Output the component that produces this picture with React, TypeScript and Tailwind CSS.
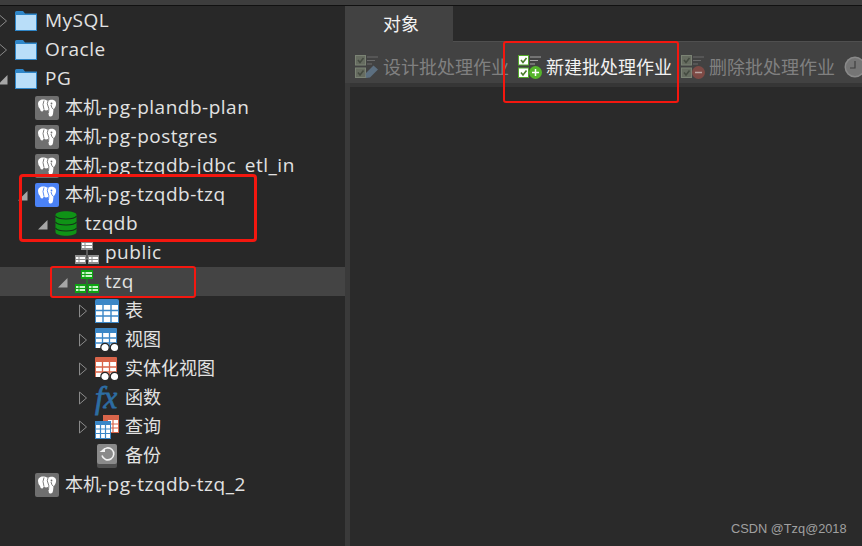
import type { ReactNode } from "react";

function ArrowOpen() {
  return (
    <svg width="10" height="14" viewBox="0 0 10 14" className="-ml-[2px] shrink-0">
      <path d="M1.5 1 L8.5 7 L1.5 13 Z" fill="none" stroke="#8a8a8a" strokeWidth="1" />
    </svg>
  );
}

function ArrowDown() {
  return (
    <svg width="10" height="10" viewBox="0 0 10 10" className="-ml-[2px] mt-[3px] shrink-0">
      <path d="M0 9.5 L9.5 9.5 L9.5 0 Z" fill="#a6a6a6" />
    </svg>
  );
}

function FolderIcon() {
  return (
    <svg width="22" height="20" viewBox="0 0 22 20">
      <path d="M0 1.5 Q0 0 1.5 0 H8 L10 2.5 H22 V20 H0 Z" fill="#2f86c8" />
      <rect x="1" y="4" width="20" height="15" fill="#b9def9" />
    </svg>
  );
}

function PgIcon({ active }: { active?: boolean }) {
  const bg = active ? "#4b82f5" : "#6f6f6f";
  return (
    <svg width="24" height="24" viewBox="0 0 24 24">
      <rect width="24" height="24" rx="2" fill={bg} />
      <path
        d="M3 8 C3 4.5 6 3 9 3.5 C11 3.8 12 4.5 13 5 C15 3.6 19 3.2 20.5 5.5 C22 8 20.5 11.5 18.5 13.5 L18 18 Q17.5 21 15 20.5 Q13.5 20 13.5 17.5 L13 14 Q10.5 15 9 13.5 L7.5 15.5 Q5.5 16 5 13 Q3 11 3 8 Z"
        fill="#ffffff"
      />
      <path d="M9 4.5 Q7 8 9 13.5 M13 5 Q11.5 8 13 10 Q14.5 12 13.5 17 M18.5 13.5 Q16.5 12 16 9" fill="none" stroke={bg} strokeWidth="0.9" />
      <circle cx="16.5" cy="7.5" r="0.9" fill={bg} />
    </svg>
  );
}

function DbIcon() {
  return (
    <svg width="22" height="25" viewBox="0 0 22 25">
      <path d="M0.5 4 C0.5 -1 21.5 -1 21.5 4 V21 C21.5 26 0.5 26 0.5 21 Z" fill="#0f9316" />
      <path d="M0.5 5 C3 9 19 9 21.5 5 M0.5 11 C3 15 19 15 21.5 11 M0.5 17 C3 21 19 21 21.5 17" fill="none" stroke="#15301a" strokeWidth="1.1" />
    </svg>
  );
}

function SchemaIcon({ color, light }: { color: string; light: string }) {
  const cell = (x: number, y: number, w: number) => (
    <g key={`${x}-${y}`}>
      <rect x={x} y={y} width={w} height="9" fill={color} />
      <rect x={x + 1} y={y + 2} width="2.5" height="2" fill={light} />
      <rect x={x + 4.5} y={y + 2} width={w - 5.5} height="2" fill={light} />
      <rect x={x + 1} y={y + 5} width="2.5" height="2" fill={light} />
      <rect x={x + 4.5} y={y + 5} width={w - 5.5} height="2" fill={light} />
    </g>
  );
  return (
    <svg width="24" height="23" viewBox="0 0 24 23">
      <path d="M12 9 V18 H10 M12 18 H14" stroke={color} strokeWidth="1" fill="none" />
      {cell(6, 0, 12)}
      {cell(0, 14, 11)}
      {cell(13, 14, 11)}
    </svg>
  );
}

function GridIcon({ color }: { color: string }) {
  return (
    <svg width="24" height="24" viewBox="0 0 24 24">
      <path d="M0 2 Q0 0 2 0 H22 Q24 0 24 2 V24 H0 Z" fill={color} />
      <rect x="1" y="6" width="22" height="17" fill="#ffffff" />
      <path d="M8 6 V23 M16 6 V23 M1 11.5 H23 M1 17 H23" stroke={color} strokeWidth="1.4" />
    </svg>
  );
}

function ViewIcon({ color }: { color: string }) {
  return (
    <svg width="24" height="24" viewBox="0 0 24 24">
      <path d="M0 1 Q0 0 1 0 H21 Q22 0 22 1 V20 H0 Z" fill={color} />
      <rect x="1" y="5" width="20" height="15" fill="#ffffff" />
      <path d="M7.5 5 V20 M14.5 5 V20 M1 10 H21 M1 15 H21" stroke={color} strokeWidth="1.3" />
      <circle cx="10" cy="19.5" r="4.2" fill="#ffffff" stroke="#282828" strokeWidth="1.2" />
      <circle cx="19.5" cy="19.5" r="4.2" fill="#ffffff" stroke="#282828" strokeWidth="1.2" />
    </svg>
  );
}

function FxIcon() {
  return (
    <span className="block font-['Liberation_Serif',serif] text-[31px] leading-[24px] text-[#2d6da3] italic [-webkit-text-stroke:0.8px_#2d6da3]">
      fx
    </span>
  );
}

function QueryIcon() {
  return (
    <svg width="24" height="24" viewBox="0 0 24 24">
      <rect x="8" y="0" width="16" height="18" fill="#d9654a" />
      <rect x="13" y="5" width="10" height="12" fill="#ffffff" />
      <path d="M18 5 V17 M13 9 H23 M13 13 H23" stroke="#d9654a" strokeWidth="1.2" />
      <rect x="0" y="6" width="16" height="18" fill="#3b87c7" />
      <rect x="1" y="10" width="14" height="13" fill="#ffffff" />
      <path d="M5.5 10 V23 M10.5 10 V23 M1 14 H15 M1 18.5 H15" stroke="#3b87c7" strokeWidth="1.2" />
    </svg>
  );
}

function BackupIcon() {
  return (
    <svg width="20" height="24" viewBox="0 0 20 24" className="ml-[2px]">
      <rect x="0" y="2" width="20" height="22" rx="2" fill="#505050" />
      <rect x="0" y="0" width="20" height="20" rx="2" fill="#8a8a8a" />
      <path d="M5.5 7 A6 6 0 1 1 5 11.5" fill="none" stroke="#f2f2f2" strokeWidth="1.6" />
      <path d="M2.5 8 H8 V4 Z" fill="#f2f2f2" />
    </svg>
  );
}

function BatchIcon({ dim, badge }: { dim?: boolean; badge: ReactNode }) {
  const box = dim ? "#666c60" : "#ffffff";
  const edge = dim ? "#7b8374" : "#55aa2c";
  const tick = dim ? "#454b41" : "#4a7d2a";
  const line = dim ? "#6a6a6a" : "#a5a5a5";
  return (
    <svg width="24" height="24" viewBox="0 0 24 24">
      <rect x="0.5" y="0.5" width="10" height="9.5" fill={box} stroke={edge} />
      <rect x="0.5" y="13" width="10" height="9.5" fill={box} stroke={edge} />
      <path d="M3 5 L5 7.5 L8.5 3 M3 17.5 L5 20 L8.5 15.5" fill="none" stroke={tick} strokeWidth="1.6" />
      <path d="M12 2 H23 M12 5.5 H20 M12 9 H17" stroke={line} strokeWidth="1" />
      {badge}
    </svg>
  );
}

const pencilBadge = (
  <path d="M11 23 L10.5 18.5 L18.5 10.5 L23 14.5 L15 22.5 Z" fill="#5c6f80" />
);
const plusBadge = (
  <g>
    <circle cx="17.5" cy="17.5" r="6.5" fill="#55b52c" />
    <path d="M14 17.5 H21 M17.5 14 V21" stroke="#ffffff" strokeWidth="1.5" />
  </g>
);
const minusBadge = (
  <g>
    <circle cx="17.5" cy="17.5" r="6.5" fill="#7d4a45" />
    <path d="M14 17.5 H21" stroke="#b9a6a3" strokeWidth="1.5" />
  </g>
);

type RowProps = {
  level: string;
  arrow?: "open" | "down";
  icon: ReactNode;
  cjk?: string;
  latin?: string;
  selected?: boolean;
};

function TreeRow({ level, arrow, icon, cjk, latin, selected }: RowProps) {
  return (
    <div className={`flex h-[29px] items-center ${level} ${selected ? "bg-[#444444]" : ""}`}>
      <span className="flex w-[15px] shrink-0 items-center">
        {arrow === "open" && <ArrowOpen />}
        {arrow === "down" && <ArrowDown />}
      </span>
      <span className="flex w-[24px] shrink-0 items-center justify-start">{icon}</span>
      <span className="ml-[6px] text-[18px] leading-[29px] whitespace-nowrap text-[#e2e2e2]">
        {cjk}
        {latin && <span className="text-[19px] tracking-[0.5px]">{latin}</span>}
      </span>
    </div>
  );
}

function ToolButton({ icon, label, dim }: { icon: ReactNode; label: string; dim?: boolean }) {
  return (
    <div className="flex w-[163px] shrink-0 items-center">
      {icon}
      <span className={`ml-[4px] text-[18px] whitespace-nowrap ${dim ? "text-[#808080]" : "text-[#f2f2f2]"}`}>
        {label}
      </span>
    </div>
  );
}

export default function App() {
  return (
    <div className="relative flex h-[546px] w-[862px] flex-col overflow-hidden bg-[#282828] font-['Open_Sans','Noto_Sans_CJK_SC',sans-serif]">
      <div className="h-[6px] shrink-0 border-b border-[#111111] bg-[#3d3d3d]" />
      <div className="flex min-h-0 flex-1">
        <div className="w-[345px] shrink-0">
          <TreeRow level="pl-0" arrow="open" icon={<FolderIcon />} latin="MySQL" />
          <TreeRow level="pl-0" arrow="open" icon={<FolderIcon />} latin="Oracle" />
          <TreeRow level="pl-0" arrow="down" icon={<FolderIcon />} latin="PG" />
          <TreeRow level="pl-[20px]" icon={<PgIcon />} cjk="本机" latin="-pg-plandb-plan" />
          <TreeRow level="pl-[20px]" icon={<PgIcon />} cjk="本机" latin="-pg-postgres" />
          <TreeRow level="pl-[20px]" icon={<PgIcon />} cjk="本机" latin="-pg-tzqdb-jdbc_etl_in" />
          <TreeRow level="pl-[20px]" arrow="down" icon={<PgIcon active />} cjk="本机" latin="-pg-tzqdb-tzq" />
          <TreeRow level="pl-[40px]" arrow="down" icon={<DbIcon />} latin="tzqdb" />
          <TreeRow level="pl-[60px]" icon={<SchemaIcon color="#8f8f8f" light="#ffffff" />} latin="public" />
          <TreeRow level="pl-[60px]" arrow="down" icon={<SchemaIcon color="#0da312" light="#c8f5c8" />} latin="tzq" selected />
          <TreeRow level="pl-[80px]" arrow="open" icon={<GridIcon color="#3b87c7" />} cjk="表" />
          <TreeRow level="pl-[80px]" arrow="open" icon={<ViewIcon color="#3b87c7" />} cjk="视图" />
          <TreeRow level="pl-[80px]" arrow="open" icon={<ViewIcon color="#d9654a" />} cjk="实体化视图" />
          <TreeRow level="pl-[80px]" arrow="open" icon={<FxIcon />} cjk="函数" />
          <TreeRow level="pl-[80px]" arrow="open" icon={<QueryIcon />} cjk="查询" />
          <TreeRow level="pl-[80px]" icon={<BackupIcon />} cjk="备份" />
          <TreeRow level="pl-[20px]" icon={<PgIcon />} cjk="本机" latin="-pg-tzqdb-tzq_2" />
        </div>

        <div className="flex min-w-0 flex-1 flex-col bg-[#3a3a3a]">
          <div className="flex h-[36px] shrink-0 bg-[#2a2a2a]">
            <div className="flex w-[108px] items-center justify-center bg-[#424242] pl-[4px] text-[18px] text-[#f2f2f2]">
              对象
            </div>
            <div className="flex-1 border-b border-[#4f4f4f]" />
          </div>
          <div className="flex h-[41px] shrink-0 items-center overflow-hidden bg-[#424242] pt-[9px] pl-[10px]">
            <ToolButton dim icon={<BatchIcon dim badge={pencilBadge} />} label="设计批处理作业" />
            <ToolButton icon={<BatchIcon badge={plusBadge} />} label="新建批处理作业" />
            <ToolButton dim icon={<BatchIcon dim badge={minusBadge} />} label="删除批处理作业" />
            <svg width="22" height="22" viewBox="0 0 22 22" className="shrink-0">
              <circle cx="11" cy="11" r="10.5" fill="#8a8a8a" />
              <circle cx="11" cy="11" r="9" fill="#757575" />
              <path d="M11 5 V12 H6" fill="none" stroke="#3f3f3f" strokeWidth="1.2" />
            </svg>
          </div>
          <div className="ml-[5px] h-[4px] shrink-0 bg-[#363636]" />
          <div className="ml-[5px] flex-1 bg-[#2a2a2a]" />
        </div>
      </div>

      <div className="absolute top-[174px] left-[19px] h-[68px] w-[238px] rounded-[4px] border-[3px] border-[#f4170f]" />
      <div className="absolute top-[266px] left-[50px] h-[32px] w-[146px] rounded-[3px] border-2 border-[#f4170f]" />
      <div className="absolute top-[41px] left-[503px] h-[62px] w-[176px] rounded-[3px] border-2 border-[#f4170f]" />
      <span className="absolute top-[521px] left-[731px] font-['Liberation_Sans',sans-serif] text-[12.8px] leading-[16px] whitespace-nowrap text-[#a0a0a0]">
        CSDN @Tzq@2018
      </span>
    </div>
  );
}
